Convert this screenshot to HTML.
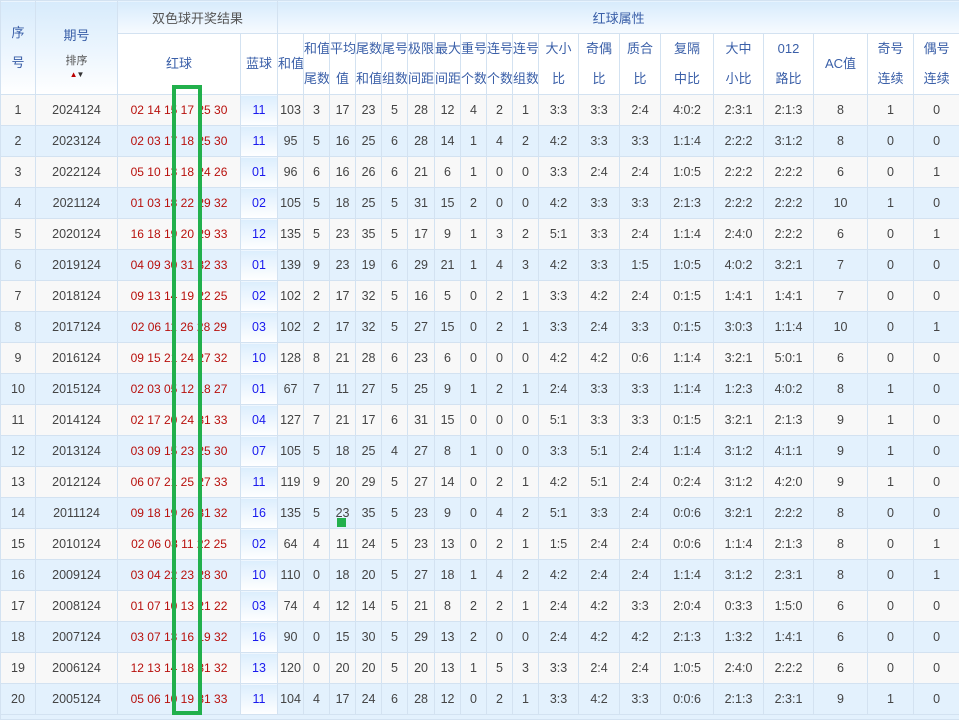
<!DOCTYPE html>
<html><head><meta charset="utf-8"><style>
body{margin:0;background:#fff;width:959px;height:719px;overflow:hidden;position:relative;font-family:"Liberation Sans","Noto Sans CJK SC",sans-serif}
table{border-collapse:collapse;table-layout:fixed;width:959px;position:absolute;left:0;top:0}
td{border:1px solid #d3e2f1;text-align:center;padding:0;font-size:12.5px;color:#444;height:30px;white-space:nowrap;overflow:hidden}
thead td{color:#3a5fa8;font-size:13px;background:#fff}
.h1 td{height:32px;background:linear-gradient(#d7ebfc,#f7fbff)}
.h2 td{height:60px;line-height:30px}
tbody tr:nth-child(odd) td{background:#f8f8f8}
tbody tr:nth-child(even) td{background:#e3f1fd}
td.r{color:#b8100c;font-size:12px}
tbody td.b{color:#1a1aee;background:linear-gradient(#dceefd,#fff)!important}
.box{position:absolute;left:172px;top:85px;width:22px;height:622px;border:4.5px solid #22b04c}
.sq{position:absolute;left:337px;top:518px;width:9px;height:9px;background:#22b04c}
.qh{position:relative}
.qh .t{position:absolute;left:0;right:0;top:24px}
.qh .s{position:absolute;left:0;right:0;top:54px;font-size:11px;line-height:13px;color:#555}
.qh .a{position:absolute;left:0;right:0;top:70px;font-size:8px;line-height:8px;letter-spacing:-1px}
</style></head><body>
<table>
<colgroup><col width="35"><col width="82"><col width="123"><col width="37"><col width="26"><col width="26"><col width="26"><col width="26"><col width="26"><col width="27"><col width="26"><col width="26"><col width="26"><col width="26"><col width="40"><col width="41"><col width="41"><col width="53"><col width="50"><col width="50"><col width="54"><col width="46"><col width="46"></colgroup>
<thead>
<tr class="h1"><td rowspan="2" style="line-height:30px;background:linear-gradient(#d7ebfc,#fff)">序<br>号</td><td rowspan="2" class="qh" style="background:linear-gradient(#d7ebfc,#fff)"><span class="t">期号</span><span class="s">排序</span><span class="a"><span style="color:#b00">▲</span><span style="color:#333">▼</span></span></td><td colspan="2" style="color:#555">双色球开奖结果</td><td colspan="19">红球属性</td></tr>
<tr class="h2"><td>红球</td><td>蓝球</td><td>和值</td><td>和值<br>尾数</td><td>平均<br>值</td><td>尾数<br>和值</td><td>尾号<br>组数</td><td>极限<br>间距</td><td>最大<br>间距</td><td>重号<br>个数</td><td>连号<br>个数</td><td>连号<br>组数</td><td>大小<br>比</td><td>奇偶<br>比</td><td>质合<br>比</td><td>复隔<br>中比</td><td>大中<br>小比</td><td>012<br>路比</td><td>AC值</td><td>奇号<br>连续</td><td>偶号<br>连续</td></tr>
</thead>
<tbody>
<tr><td>1</td><td>2024124</td><td class="r">02 14 15 17 25 30</td><td class="b">11</td><td>103</td><td>3</td><td>17</td><td>23</td><td>5</td><td>28</td><td>12</td><td>4</td><td>2</td><td>1</td><td>3:3</td><td>3:3</td><td>2:4</td><td>4:0:2</td><td>2:3:1</td><td>2:1:3</td><td>8</td><td>1</td><td>0</td></tr>
<tr><td>2</td><td>2023124</td><td class="r">02 03 17 18 25 30</td><td class="b">11</td><td>95</td><td>5</td><td>16</td><td>25</td><td>6</td><td>28</td><td>14</td><td>1</td><td>4</td><td>2</td><td>4:2</td><td>3:3</td><td>3:3</td><td>1:1:4</td><td>2:2:2</td><td>3:1:2</td><td>8</td><td>0</td><td>0</td></tr>
<tr><td>3</td><td>2022124</td><td class="r">05 10 13 18 24 26</td><td class="b">01</td><td>96</td><td>6</td><td>16</td><td>26</td><td>6</td><td>21</td><td>6</td><td>1</td><td>0</td><td>0</td><td>3:3</td><td>2:4</td><td>2:4</td><td>1:0:5</td><td>2:2:2</td><td>2:2:2</td><td>6</td><td>0</td><td>1</td></tr>
<tr><td>4</td><td>2021124</td><td class="r">01 03 18 22 29 32</td><td class="b">02</td><td>105</td><td>5</td><td>18</td><td>25</td><td>5</td><td>31</td><td>15</td><td>2</td><td>0</td><td>0</td><td>4:2</td><td>3:3</td><td>3:3</td><td>2:1:3</td><td>2:2:2</td><td>2:2:2</td><td>10</td><td>1</td><td>0</td></tr>
<tr><td>5</td><td>2020124</td><td class="r">16 18 19 20 29 33</td><td class="b">12</td><td>135</td><td>5</td><td>23</td><td>35</td><td>5</td><td>17</td><td>9</td><td>1</td><td>3</td><td>2</td><td>5:1</td><td>3:3</td><td>2:4</td><td>1:1:4</td><td>2:4:0</td><td>2:2:2</td><td>6</td><td>0</td><td>1</td></tr>
<tr><td>6</td><td>2019124</td><td class="r">04 09 30 31 32 33</td><td class="b">01</td><td>139</td><td>9</td><td>23</td><td>19</td><td>6</td><td>29</td><td>21</td><td>1</td><td>4</td><td>3</td><td>4:2</td><td>3:3</td><td>1:5</td><td>1:0:5</td><td>4:0:2</td><td>3:2:1</td><td>7</td><td>0</td><td>0</td></tr>
<tr><td>7</td><td>2018124</td><td class="r">09 13 14 19 22 25</td><td class="b">02</td><td>102</td><td>2</td><td>17</td><td>32</td><td>5</td><td>16</td><td>5</td><td>0</td><td>2</td><td>1</td><td>3:3</td><td>4:2</td><td>2:4</td><td>0:1:5</td><td>1:4:1</td><td>1:4:1</td><td>7</td><td>0</td><td>0</td></tr>
<tr><td>8</td><td>2017124</td><td class="r">02 06 11 26 28 29</td><td class="b">03</td><td>102</td><td>2</td><td>17</td><td>32</td><td>5</td><td>27</td><td>15</td><td>0</td><td>2</td><td>1</td><td>3:3</td><td>2:4</td><td>3:3</td><td>0:1:5</td><td>3:0:3</td><td>1:1:4</td><td>10</td><td>0</td><td>1</td></tr>
<tr><td>9</td><td>2016124</td><td class="r">09 15 21 24 27 32</td><td class="b">10</td><td>128</td><td>8</td><td>21</td><td>28</td><td>6</td><td>23</td><td>6</td><td>0</td><td>0</td><td>0</td><td>4:2</td><td>4:2</td><td>0:6</td><td>1:1:4</td><td>3:2:1</td><td>5:0:1</td><td>6</td><td>0</td><td>0</td></tr>
<tr><td>10</td><td>2015124</td><td class="r">02 03 05 12 18 27</td><td class="b">01</td><td>67</td><td>7</td><td>11</td><td>27</td><td>5</td><td>25</td><td>9</td><td>1</td><td>2</td><td>1</td><td>2:4</td><td>3:3</td><td>3:3</td><td>1:1:4</td><td>1:2:3</td><td>4:0:2</td><td>8</td><td>1</td><td>0</td></tr>
<tr><td>11</td><td>2014124</td><td class="r">02 17 20 24 31 33</td><td class="b">04</td><td>127</td><td>7</td><td>21</td><td>17</td><td>6</td><td>31</td><td>15</td><td>0</td><td>0</td><td>0</td><td>5:1</td><td>3:3</td><td>3:3</td><td>0:1:5</td><td>3:2:1</td><td>2:1:3</td><td>9</td><td>1</td><td>0</td></tr>
<tr><td>12</td><td>2013124</td><td class="r">03 09 15 23 25 30</td><td class="b">07</td><td>105</td><td>5</td><td>18</td><td>25</td><td>4</td><td>27</td><td>8</td><td>1</td><td>0</td><td>0</td><td>3:3</td><td>5:1</td><td>2:4</td><td>1:1:4</td><td>3:1:2</td><td>4:1:1</td><td>9</td><td>1</td><td>0</td></tr>
<tr><td>13</td><td>2012124</td><td class="r">06 07 21 25 27 33</td><td class="b">11</td><td>119</td><td>9</td><td>20</td><td>29</td><td>5</td><td>27</td><td>14</td><td>0</td><td>2</td><td>1</td><td>4:2</td><td>5:1</td><td>2:4</td><td>0:2:4</td><td>3:1:2</td><td>4:2:0</td><td>9</td><td>1</td><td>0</td></tr>
<tr><td>14</td><td>2011124</td><td class="r">09 18 19 26 31 32</td><td class="b">16</td><td>135</td><td>5</td><td>23</td><td>35</td><td>5</td><td>23</td><td>9</td><td>0</td><td>4</td><td>2</td><td>5:1</td><td>3:3</td><td>2:4</td><td>0:0:6</td><td>3:2:1</td><td>2:2:2</td><td>8</td><td>0</td><td>0</td></tr>
<tr><td>15</td><td>2010124</td><td class="r">02 06 08 11 22 25</td><td class="b">02</td><td>64</td><td>4</td><td>11</td><td>24</td><td>5</td><td>23</td><td>13</td><td>0</td><td>2</td><td>1</td><td>1:5</td><td>2:4</td><td>2:4</td><td>0:0:6</td><td>1:1:4</td><td>2:1:3</td><td>8</td><td>0</td><td>1</td></tr>
<tr><td>16</td><td>2009124</td><td class="r">03 04 22 23 28 30</td><td class="b">10</td><td>110</td><td>0</td><td>18</td><td>20</td><td>5</td><td>27</td><td>18</td><td>1</td><td>4</td><td>2</td><td>4:2</td><td>2:4</td><td>2:4</td><td>1:1:4</td><td>3:1:2</td><td>2:3:1</td><td>8</td><td>0</td><td>1</td></tr>
<tr><td>17</td><td>2008124</td><td class="r">01 07 10 13 21 22</td><td class="b">03</td><td>74</td><td>4</td><td>12</td><td>14</td><td>5</td><td>21</td><td>8</td><td>2</td><td>2</td><td>1</td><td>2:4</td><td>4:2</td><td>3:3</td><td>2:0:4</td><td>0:3:3</td><td>1:5:0</td><td>6</td><td>0</td><td>0</td></tr>
<tr><td>18</td><td>2007124</td><td class="r">03 07 13 16 19 32</td><td class="b">16</td><td>90</td><td>0</td><td>15</td><td>30</td><td>5</td><td>29</td><td>13</td><td>2</td><td>0</td><td>0</td><td>2:4</td><td>4:2</td><td>4:2</td><td>2:1:3</td><td>1:3:2</td><td>1:4:1</td><td>6</td><td>0</td><td>0</td></tr>
<tr><td>19</td><td>2006124</td><td class="r">12 13 14 18 31 32</td><td class="b">13</td><td>120</td><td>0</td><td>20</td><td>20</td><td>5</td><td>20</td><td>13</td><td>1</td><td>5</td><td>3</td><td>3:3</td><td>2:4</td><td>2:4</td><td>1:0:5</td><td>2:4:0</td><td>2:2:2</td><td>6</td><td>0</td><td>0</td></tr>
<tr><td>20</td><td>2005124</td><td class="r">05 06 10 19 31 33</td><td class="b">11</td><td>104</td><td>4</td><td>17</td><td>24</td><td>6</td><td>28</td><td>12</td><td>0</td><td>2</td><td>1</td><td>3:3</td><td>4:2</td><td>3:3</td><td>0:0:6</td><td>2:1:3</td><td>2:3:1</td><td>9</td><td>1</td><td>0</td></tr>
<tr><td colspan="23" style="height:4px;background:#e3f1fd"></td></tr>
</tbody>
</table>
<div class="box"></div>
<div class="sq"></div>
</body></html>
